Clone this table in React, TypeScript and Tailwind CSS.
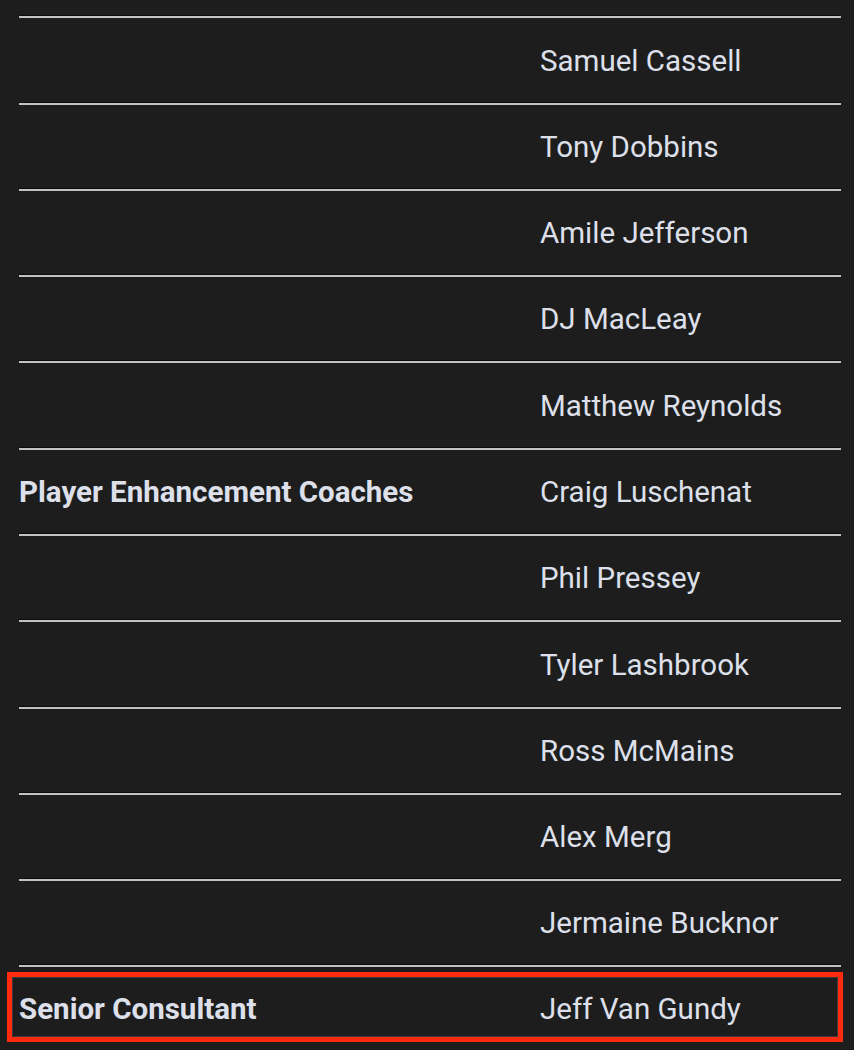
const rows: { label?: string; name: string; tall?: boolean }[] = [
  { name: "Samuel Cassell", tall: true },
  { name: "Tony Dobbins" },
  { name: "Amile Jefferson" },
  { name: "DJ MacLeay" },
  { name: "Matthew Reynolds", tall: true },
  { label: "Player Enhancement Coaches", name: "Craig Luschenat" },
  { name: "Phil Pressey" },
  { name: "Tyler Lashbrook", tall: true },
  { name: "Ross McMains" },
  { name: "Alex Merg" },
  { name: "Jermaine Bucknor" },
];

function Row({ label, name, tall }: { label?: string; name: string; tall?: boolean }) {
  return (
    <div className={`flex flex-col ${tall ? "h-[87px]" : "h-[86px]"}`}>
      <div className="h-px bg-[#0c0c0c]" />
      <div className="h-[2px] bg-[#c2c2c4]" />
      <div className="flex flex-1 items-center pt-[3px]">
        <div className="w-[521px] font-bold text-[#dde0ea]">{label}</div>
        <div className="text-[#dde0ea]">{name}</div>
      </div>
    </div>
  );
}

export default function App() {
  return (
    <div
      className="min-h-screen bg-[#1d1d1d] pl-[19px] pr-[13px] text-[29.5px] leading-none"
      style={{ fontFamily: "Roboto, 'Noto Sans', sans-serif" }}
    >
      <div className="h-[15px]" />
      <div className="w-[822px]">
        {rows.map((r) => (
          <Row key={r.name} {...r} />
        ))}
        <div className="relative flex h-[86px] flex-col">
          <div className="h-px bg-[#0c0c0c]" />
          <div className="h-[2px] bg-[#c2c2c4]" />
          <div className="flex flex-1 items-center pt-[3px]">
            <div className="w-[521px] font-bold text-[#dde0ea]">Senior Consultant</div>
            <div className="text-[#dde0ea]">Jeff Van Gundy</div>
          </div>
          <div className="pointer-events-none absolute left-[-12px] right-[-2px] top-[8px] h-[70px] border-[5px] border-[#ff2a0f]">
            <div className="h-full w-full border border-[#3a3a3a]" />
          </div>
        </div>
      </div>
    </div>
  );
}
